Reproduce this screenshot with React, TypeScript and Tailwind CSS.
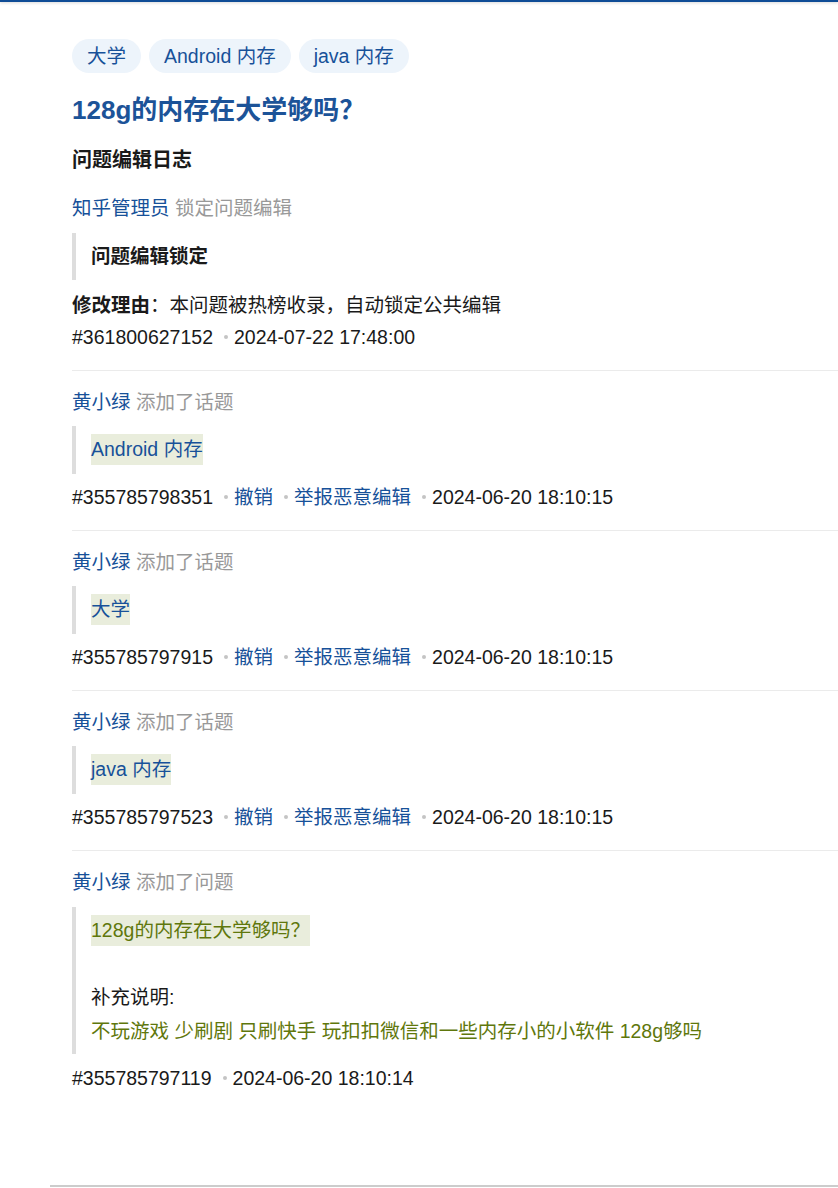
import type { ReactNode } from 'react'

const tags = ['大学', 'Android 内存', 'java 内存']

type Entry = {
  id: string
  time: string
  topic: string
}

const topicEntries: Entry[] = [
  { id: '#355785798351', time: '2024-06-20 18:10:15', topic: 'Android 内存' },
  { id: '#355785797915', time: '2024-06-20 18:10:15', topic: '大学' },
  { id: '#355785797523', time: '2024-06-20 18:10:15', topic: 'java 内存' },
]

function Dot() {
  return <span className="relative -top-[2px] inline-block w-[4px] h-[4px] rounded-full bg-[#c4c4c4] ml-[11px] mr-[6px] align-middle" />
}

function Quote({ children, className = '' }: { children: ReactNode; className?: string }) {
  return (
    <div className={`border-l-4 border-[#dddddd] pl-[15px] ${className}`}>
      {children}
    </div>
  )
}

function Mark({ children, green }: { children: ReactNode; green?: boolean }) {
  return (
    <div
      className={`w-fit h-[31px] leading-[31px] bg-[#e9eddc] ${green ? 'text-[#5f770c]' : 'text-[#175199]'}`}
    >
      {children}
    </div>
  )
}

function Actor({ name, action }: { name: string; action: string }) {
  return (
    <div>
      <span className="text-[#175199]">{name}</span>{' '}
      <span className="text-[#999999]">{action}</span>
    </div>
  )
}

export default function App() {
  return (
    <div className="min-h-[1188px] bg-white text-[#1a1a1a] font-['Liberation_Sans','Noto_Sans_CJK_SC',sans-serif] text-[19.5px] leading-8">
      {/* top bar */}
      <div className="h-[2px] bg-[#0f4c96] shadow-[0_1px_3px_rgba(0,0,0,0.18)]" />

      <div className="ml-[50px] pb-[74px] border-b-2 border-[#cccccc]">
        <div className="pl-[22px]">
          {/* Tags */}
          <div className="flex gap-2 pt-[37px]">
            {tags.map(t => (
              <span key={t} className="h-[34px] leading-[34px] px-[15px] rounded-full bg-[#edf4fb] text-[#175199]">
                {t}
              </span>
            ))}
          </div>

          <h1 className="mt-[19px] text-[26px] leading-9 font-bold text-[#1c5398]">128g的内存在大学够吗？</h1>

          <h2 className="mt-4 text-[20px] leading-8 font-bold text-[#1a1a1a]">问题编辑日志</h2>

          {/* Lock entry */}
          <div className="mt-4 pb-[17px]">
            <Actor name="知乎管理员" action="锁定问题编辑" />
            <Quote className="mt-[9px] py-2">
              <div className="h-[31px] leading-[31px] font-bold">问题编辑锁定</div>
            </Quote>
            <div className="mt-[9px]">
              <span className="font-bold">修改理由</span>：本问题被热榜收录，自动锁定公共编辑
            </div>
            <div>
              #361800627152<Dot />2024-07-22 17:48:00
            </div>
          </div>

          {topicEntries.map(e => (
            <div key={e.id} className="border-t border-[#ebebeb] pt-[15px] pb-[17px]">
              <Actor name="黄小绿" action="添加了话题" />
              <Quote className="mt-2 pt-2 pb-[9px]">
                <Mark>{e.topic}</Mark>
              </Quote>
              <div className="mt-[7px]">
                {e.id}
                <Dot />
                <span className="text-[#175199]">撤销</span>
                <Dot />
                <span className="text-[#175199]">举报恶意编辑</span>
                <Dot />
                {e.time}
              </div>
            </div>
          ))}

          {/* Question creation */}
          <div className="border-t border-[#ebebeb] pt-[15px] pb-[17px]">
            <Actor name="黄小绿" action="添加了问题" />
            <Quote className="mt-[9px] pt-2 pb-[7px]">
              <Mark green>128g的内存在大学够吗？</Mark>
              <div className="mt-[35px]">补充说明:</div>
              <div className="mt-[2px] text-[#5f770c]">不玩游戏 少刷剧 只刷快手 玩扣扣微信和一些内存小的小软件 128g够吗</div>
            </Quote>
            <div className="mt-2">
              #355785797119<Dot />2024-06-20 18:10:14
            </div>
          </div>
        </div>
      </div>
    </div>
  )
}
